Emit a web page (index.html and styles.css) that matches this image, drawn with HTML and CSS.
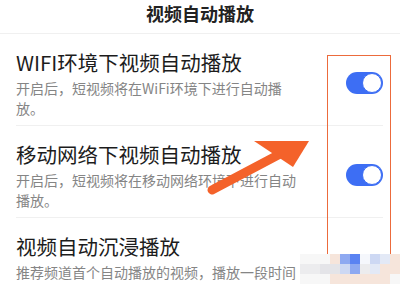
FILE: index.html
```html
<!DOCTYPE html>
<html lang="zh-CN">
  <head>
    <meta charset="UTF-8" />
    <meta name="viewport" content="width=device-width, initial-scale=1.0" />
    <title>视频自动播放</title>
    <link rel="stylesheet" href="styles.css">
  </head>
  <body>
    <div class="page">
      <div class="header">视频自动播放</div>

      <div class="row">
        <div class="text">
          <div class="name">WIFI环境下视频自动播放</div>
          <div class="desc">开启后，短视频将在WiFi环境下进行自动播<br>放。</div>
        </div>
        <div class="switch on"><span class="knob"></span></div>
      </div>

      <div class="row">
        <div class="text">
          <div class="name">移动网络下视频自动播放</div>
          <div class="desc">开启后，短视频将在移动网络环境下进行自动播放。</div>
        </div>
        <div class="switch on"><span class="knob"></span></div>
      </div>

      <div class="row last">
        <div class="text">
          <div class="name">视频自动沉浸播放</div>
          <div class="desc">推荐频道首个自动播放的视频，播放一段时间</div>
        </div>
      </div>

      <!-- annotation on top of the screenshot -->
      <div class="highlight"></div>
      <svg class="arrow" width="400" height="284" viewBox="0 0 400 284">
        <line x1="212" y1="190" x2="280" y2="154" stroke="#f4622a" stroke-width="9" stroke-linecap="round" />
        <polygon points="254,141 309,141 293,167" fill="#f4622a" />
      </svg>

      <div class="mosaic">
        <span class="c1"></span><span class="c1"></span><span class="c1"></span><span class="c2"></span><span class="c3"></span><span class="c4"></span><span class="c5"></span><span class="c6"></span><span class="c7"></span><span class="c2"></span>
        <span class="c8"></span><span class="c8"></span><span class="c9"></span><span class="c9"></span><span class="c6"></span><span class="c3"></span><span class="c8"></span><span class="c7"></span><span class="c2"></span><span class="c2"></span>
        <span class="c1"></span><span class="c1"></span><span class="c1"></span><span class="c2"></span><span class="c2"></span><span class="c2"></span><span class="c2"></span><span class="c2"></span><span class="c2"></span><span class="c1"></span>
      </div>
    </div>
  </body>
</html>
```

FILE: styles.css
```css
body {
  margin: 0;
  background: #fff;
  font-family: "Noto Sans CJK SC", "Noto Sans", sans-serif;
}
.page {
  position: relative;
  width: 400px;
  height: 284px;
  overflow: hidden;
}
.header {
  height: 33px;
  line-height: 27px;
  text-align: center;
  font-size: 18px;
  font-weight: bold;
  color: #222;
  border-bottom: 1px solid #f0f0f0;
}
.row {
  display: flex;
  align-items: center;
  margin: 0 17px 0 16px;
  padding: 14px 0 7px;
  border-bottom: 1px solid #f0f0f0;
}
.row.last {
  border-bottom: none;
}
.text {
  flex: 1;
}
.name {
  font-size: 20.5px;
  line-height: 28px;
  color: #1c1c1c;
}
.desc {
  margin-top: 2px;
  max-width: 286px;
  font-size: 14px;
  line-height: 20px;
  color: #858585;
}
.switch {
  position: relative;
  width: 37px;
  height: 22px;
  border-radius: 11px;
  background: #3d6ef4;
}
.knob {
  position: absolute;
  top: 1px;
  right: 1px;
  width: 20px;
  height: 20px;
  box-sizing: border-box;
  border-radius: 50%;
  background: #fff;
  border: 1px solid #3d6ef4;
}
.highlight {
  position: absolute;
  left: 327px;
  top: 55px;
  width: 62px;
  height: 224px;
  border: 1.5px solid #ec6b3c;
}
.arrow {
  position: absolute;
  left: 0;
  top: 0;
}
.mosaic {
  position: absolute;
  left: 300px;
  top: 254px;
  display: grid;
  grid-template-columns: repeat(10, 10px);
  grid-auto-rows: 10px;
}
.c1 { background: #f7f7f7; }
.c2 { background: #f6e5db; }
.c3 { background: #8ea9f1; }
.c4 { background: #5a83f2; }
.c5 { background: #f5f7fc; }
.c6 { background: #cdd8f3; }
.c7 { background: #e3e9f6; }
.c8 { background: #ececee; }
.c9 { background: #e4e4e8; }
```
